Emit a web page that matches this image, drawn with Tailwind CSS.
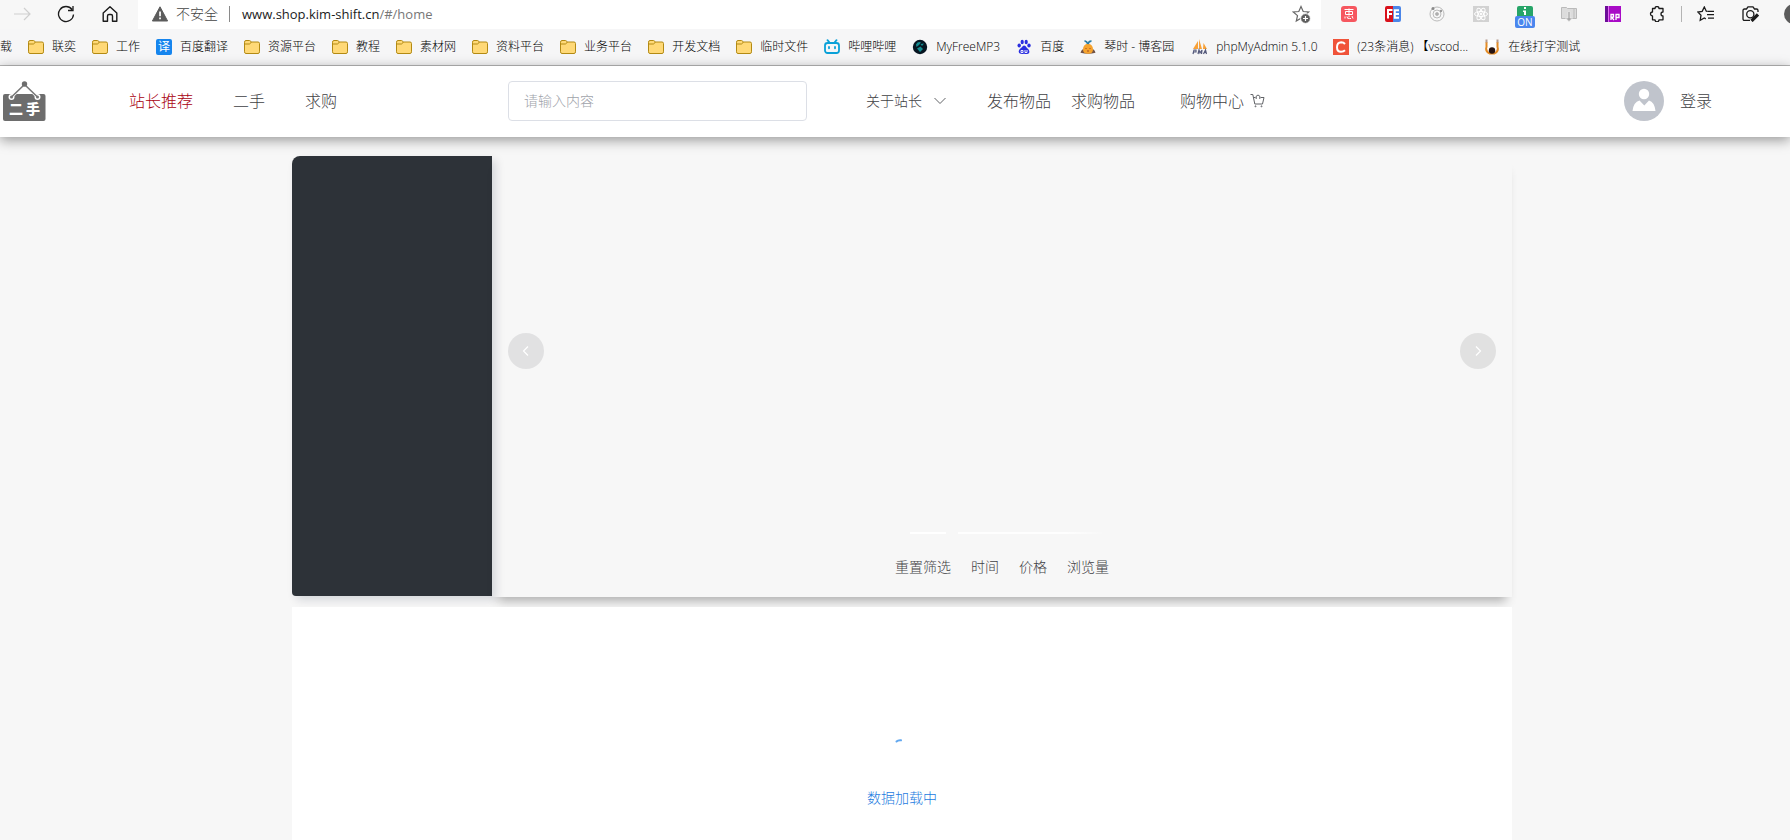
<!DOCTYPE html>
<html lang="zh-CN">
<head>
<meta charset="utf-8">
<title>二手</title>
<script src="https://cdn.jsdelivr.net/npm/@tailwindcss/browser@4"></script>
</head>
<body class="min-h-screen overflow-hidden flex flex-col bg-[#f7f7f7] font-['Open_Sans','Noto_Sans_CJK_SC',sans-serif] font-light text-[#3f4145]">
<svg class="hidden" aria-hidden="true">
  <symbol id="folder" viewBox="0 0 16 16">
    <path d="M.5 3.2Q.5 1.5 2 1.5h3.4q.8 0 1.300.7l.5.8H14q1.500 0 1.500 1.500V12.800q0 1.700-1.500 1.700H2Q.5 14.500.5 12.800Z" fill="#ffd977" stroke="#b38a13"/>
    <path d="M.8 5h4.400q.8 0 1.300-.7L7.300 3" fill="none" stroke="#b38a13"/>
  </symbol>
</svg>

<!-- Browser toolbar -->
<div class="flex h-[29px] shrink-0 bg-[#f7f7f7] text-black">
  <div class="flex w-[138px] shrink-0 items-center pl-[10px] pb-px">
    <button class="w-6 flex justify-center" aria-label="前进"><svg width="18" height="16" viewBox="0 0 18 16" fill="none" stroke="#cfcfcf" stroke-width="1.200"><path d="M1 8h16M11 2l6 6-6 6"/></svg></button>
    <button class="w-6 ml-5 flex justify-center" aria-label="刷新"><svg width="18" height="18" viewBox="0 0 18 18" fill="none" stroke="#1b1b1b" stroke-width="1.300"><path d="M16.500 9.500A7.500 7.500 0 1 1 15 4.500M16 1v4.500h-5"/></svg></button>
    <button class="w-6 ml-5 flex justify-center" aria-label="主页"><svg width="18" height="18" viewBox="0 0 18 18" fill="none" stroke="#1b1b1b" stroke-width="1.400" stroke-linejoin="round"><path d="M2.200 8 9 1.800 15.800 8v8.200h-4.300V11q0-1.500-1.500-1.500H8Q6.500 9.500 6.500 11v5.200H2.200Z"/></svg></button>
  </div>
  <div class="flex flex-1 min-w-0 items-center bg-white pl-[14px] pr-[10px] pb-px text-sm">
    <svg class="shrink-0" width="16" height="16" viewBox="0 0 16 16"><path d="M8 .8 15.600 15H.4Z" fill="#5c5c5c" stroke="#5c5c5c" stroke-linejoin="round"/><path d="M7.200 5.500h1.700v4.800H7.200zM7.200 11.500h1.700v1.700H7.200z" fill="#fff"/></svg>
    <span class="ml-2 text-[#444] whitespace-nowrap">不安全</span>
    <span class="ml-[11px] h-4 w-px bg-[#8a8a8a]"></span>
    <span class="ml-3 text-[13px] font-normal whitespace-nowrap text-[#1b1b1b]">www.shop.kim-shift.cn<span class="text-[#777]">/#/home</span></span>
    <button class="ml-auto" aria-label="收藏此页"><svg width="19" height="19" viewBox="0 0 19 19"><path d="M9 1.500l2.200 5 5.500.5-4.200 3.600L13.700 16 9 13.200 4.300 16l1.200-5.400L1.300 7l5.500-.5Z" fill="none" stroke="#686868" stroke-width="1.200"/><circle cx="13.500" cy="13.500" r="4.900" fill="#5f5f5f" stroke="#fff"/><path d="M13.500 11v5M11 13.500h5" stroke="#fff" stroke-width="1.200"/></svg></button>
  </div>
  <div class="flex shrink-0 w-[469px] overflow-hidden items-center pl-[6px] pb-px">
    <button class="w-11 shrink-0 flex justify-center" aria-label="扩展"><svg width="16" height="16" viewBox="0 0 16 16"><rect width="16" height="16" rx="3" fill="#f6575f"/><path d="M3.500 3.500h9M4.500 5.500h7v3h-7zM8 2.500v7M4 10.500v2M6 10.500q0 2.500 2.500 2h1.500M8 10.200v1M11 10l1 2.500" fill="none" stroke="#fff"/></svg></button>
    <button class="w-11 shrink-0 flex justify-center" aria-label="FeHelper"><svg width="16" height="16" viewBox="0 0 16 16"><path d="M2 0h6v16H2q-2 0-2-2V2q0-2 2-2" fill="#d9111b"/><path d="M8 0h6q2 0 2 2v12q0 2-2 2H8Z" fill="#4b86e8"/><path d="M3 12.500V4h4.500M3 8h4M14 4.200H9.800v7.600H14M9.800 8H14" fill="none" stroke="#fff" stroke-width="2"/></svg></button>
    <button class="w-11 shrink-0 flex justify-center" aria-label="轨道"><svg width="16" height="16" viewBox="0 0 16 16" fill="none" stroke="#bbb"><circle cx="8" cy="8" r="7"/><circle cx="8" cy="8" r="4"/><circle cx="8" cy="8" r="1.500" fill="#aaa"/><circle cx="4" cy="2.500" r="1.500" fill="#888" stroke="none"/><circle cx="12" cy="5" r="1.200" fill="#999" stroke="none"/></svg></button>
    <button class="w-11 shrink-0 flex justify-center" aria-label="React"><svg width="16" height="16" viewBox="0 0 16 16" fill="none" stroke="#fff"><rect width="16" height="16" fill="#d2d2d2" stroke="none"/><ellipse cx="8" cy="8" rx="6.500" ry="2.500"/><ellipse cx="8" cy="8" rx="6.500" ry="2.500" transform="rotate(60 8 8)"/><ellipse cx="8" cy="8" rx="6.500" ry="2.500" transform="rotate(120 8 8)"/><circle cx="8" cy="8" r="1" fill="#fff"/></svg></button>
    <button class="w-11 shrink-0 flex flex-col items-center pt-[6px]" aria-label="扩展已开启"><svg width="16" height="10" viewBox="0 0 16 10"><path d="M2 0h12q2 0 2 2v8H0V2q0-2 2-2" fill="#27a568"/><path d="M7 1h2v2H7zM6 4.500h3V9H7V6H6z" fill="#fff"/></svg><span class="w-5 h-3 bg-[#4a86ee] rounded-[2px] text-white text-[10px] leading-3 font-normal text-center">ON</span></button>
    <button class="w-11 shrink-0 flex justify-center" aria-label="下载文件夹"><svg width="16" height="16" viewBox="0 0 16 16"><path d="M.5 1.500h5l1 1h9v10H.5Z" fill="#dcdcdc" stroke="#bababa"/><path d="M13 2v10" stroke="#bbb"/><path d="M7 5.500h2V12h2.500L8 15.500 4.500 12H7Z" fill="#aaa" stroke="#eee" stroke-width=".6"/></svg></button>
    <button class="w-11 shrink-0 flex justify-center" aria-label="Axure RP"><svg width="16" height="16" viewBox="0 0 16 16"><path d="M0 0h16v16H0z" fill="#a80bc6"/><path d="M0 0h3v16H0z" fill="#6c0d98"/><path d="M3 0h1v16H3z" fill="#e06cf0"/><path d="M6 14V8.500h2.500v2.700H6.500L9 14M11 14V8.500h3v3h-3" fill="none" stroke="#fff" stroke-width="1.300"/></svg></button>
    <button class="w-11 shrink-0 flex justify-center" aria-label="扩展管理"><svg width="16" height="16" viewBox="0 0 16 16" fill="none" stroke="#1b1b1b" stroke-width="1.300" stroke-linejoin="round"><path d="M3.500 2.500H6a2 2 0 0 1 4 0h4V6a2 2 0 1 0 0 4v3.800h-4a2 2 0 0 1-4 0H3.500V10a2 2 0 0 1 0-4Z"/></svg></button>
    <span class="h-4 w-px shrink-0 ml-[2px] mr-[2px] bg-[#b4b4b4]"></span>
    <button class="w-11 shrink-0 flex justify-center" aria-label="收藏夹"><svg width="18" height="16" viewBox="0 0 18 16" fill="none" stroke="#1b1b1b" stroke-width="1.300"><path d="M10.300 5.400 9.300 5.200 7.300 1 5.200 5.300.8 6 4 9.300 3.200 14.200 7.300 12l1.500.9M10.500 5.300H17M10 8.700h7M11 12.100h6"/></svg></button>
    <button class="w-11 shrink-0 flex justify-center" aria-label="网页捕获"><svg width="17" height="16" viewBox="0 0 17 16" fill="none" stroke="#1b1b1b" stroke-width="1.300"><path d="M8 14.300H2.500Q1 14.300 1 12.800V4.500Q1 3 2.500 3h2L6 .9h5L12.500 3h2Q16 3 16 4.500V6"/><circle cx="8.300" cy="8.300" r="3.600"/><path d="M16 8.500 9.500 15" stroke-width="3.200"/></svg></button>
    <button class="w-11 shrink-0 flex justify-center" aria-label="个人资料"><span class="size-5 rounded-full bg-[#5c5c5c]"></span></button>
  </div>
</div>

<!-- Bookmarks bar -->
<nav class="flex h-[37px] shrink-0 items-center gap-4 border-b border-[#b8b8b8] bg-[#f6f6f7] overflow-hidden whitespace-nowrap text-xs text-black" aria-label="书签">
  <a href="#" class="w-3 shrink-0">载</a>
  <a href="#" class="flex shrink-0 items-center gap-2"><svg width="16" height="16"><use href="#folder"/></svg>联奕</a>
  <a href="#" class="flex shrink-0 items-center gap-2"><svg width="16" height="16"><use href="#folder"/></svg>工作</a>
  <a href="#" class="flex shrink-0 items-center gap-2"><span class="size-4 rounded-[2px] bg-[#1685ee] text-white text-xs leading-4 font-normal text-center">译</span>百度翻译</a>
  <a href="#" class="flex shrink-0 items-center gap-2"><svg width="16" height="16"><use href="#folder"/></svg>资源平台</a>
  <a href="#" class="flex shrink-0 items-center gap-2"><svg width="16" height="16"><use href="#folder"/></svg>教程</a>
  <a href="#" class="flex shrink-0 items-center gap-2"><svg width="16" height="16"><use href="#folder"/></svg>素材网</a>
  <a href="#" class="flex shrink-0 items-center gap-2"><svg width="16" height="16"><use href="#folder"/></svg>资料平台</a>
  <a href="#" class="flex shrink-0 items-center gap-2"><svg width="16" height="16"><use href="#folder"/></svg>业务平台</a>
  <a href="#" class="flex shrink-0 items-center gap-2"><svg width="16" height="16"><use href="#folder"/></svg>开发文档</a>
  <a href="#" class="flex shrink-0 items-center gap-2"><svg width="16" height="16"><use href="#folder"/></svg>临时文件</a>
  <a href="#" class="flex shrink-0 items-center gap-2"><svg width="16" height="16" viewBox="0 0 16 16" fill="none" stroke="#0aa1d8" stroke-width="1.800" stroke-linecap="round"><rect x="1" y="4" width="14" height="10" rx="2.500"/><path d="M3.500 1.200 5.500 3.500M12.500 1.200 10.500 3.500M5 8v1.300M11 8v1.300"/></svg>哔哩哔哩</a>
  <a href="#" class="flex shrink-0 items-center gap-2"><svg width="16" height="16" viewBox="0 0 16 16"><circle cx="8" cy="8" r="7.200" fill="#071622"/><path d="M4 5.500Q6 2 9 3.500L7 6 4.500 8ZM8.500 5 12 4.500 10 7ZM5 9.500 8.500 7.500 11 10 8 13Z" fill="#148c91"/></svg><span class="w-16">MyFreeMP3</span></a>
  <a href="#" class="flex shrink-0 items-center gap-2"><svg width="16" height="16" viewBox="0 0 16 16" fill="#2b2fe0"><ellipse cx="3.200" cy="6.500" rx="1.700" ry="2.100"/><ellipse cx="6.200" cy="3" rx="1.600" ry="2.200"/><ellipse cx="10.200" cy="3" rx="1.600" ry="2.200"/><ellipse cx="13" cy="6.500" rx="1.700" ry="2.100"/><path d="M8 6.500q1.500 0 2.800 2.200l2 2q1.500 3-.8 4-1.500.5-4 .1-2.500.5-4.200-.2-2-1.500-.4-4L5.800 8.200Q7 6.500 8 6.500"/><path d="M5 11.500h2v2H5zM9 11v2.500h2V11" fill="none" stroke="#fff" stroke-width=".9"/></svg>百度</a>
  <a href="#" class="flex shrink-0 items-center gap-2"><svg width="16" height="16" viewBox="0 0 16 16"><path d="M.5 13.800Q1.500 10 5 9.500h6q3.500.5 4.500 4.300-7 1.800-15 0" fill="#725347"/><path d="M8 4.500q5 1 5 6 0 4.200-5 4.200t-5-4.200Q3 5.500 8 4.500" fill="#f5a32e"/><path d="M7.800 5Q7 2.500 4.500 1.800M8 5Q9 2 11.500 2.200" stroke="#287da8" stroke-width="1.700" fill="none"/><path d="M6 9v1M10 9v1M7 11.800q1 .8 2 0" stroke="#a34b20" fill="none"/></svg><span class="w-18">琴时 - 博客园</span></a>
  <a href="#" class="flex shrink-0 items-center gap-2"><svg width="16" height="16" viewBox="0 0 16 16"><path d="M1 10 6 2v8ZM7 10V0l3 10ZM11 10l.5-6L15 10Z" fill="#f8a137"/><path d="M1 15l1-4h2v2H2M6 15l1-4 1 3 2-3-.5 4M11.500 15l2-4 1 4M12.500 13.500h2" fill="none" stroke="#555a7c" stroke-width="1.200"/></svg><span class="w-[101px]">phpMyAdmin 5.1.0</span></a>
  <a href="#" class="flex shrink-0 items-center gap-2"><svg width="16" height="16" viewBox="0 0 16 16"><path d="M0 0h16v16H0z" fill="#f0533a"/><path d="M12 5Q10.500 3.300 8.300 3.300 4 3.500 4 8.200q0 4.500 4 4.500 2.500 0 4-1.500" fill="none" stroke="#fff" stroke-width="2"/></svg><span class="w-[111px]">(23条消息) 【vscod...</span></a>
  <a href="#" class="flex shrink-0 items-center gap-2"><svg width="16" height="16" viewBox="0 0 16 16"><path d="M2 1h12v11H2z" fill="#fff"/><path d="M2.500 3v5q-1.500 4 3 6.500h5q4.500-2.500 3-6.500V3" fill="none" stroke="#e48b25" stroke-width="2"/><path d="M1.500.5h2v3h-2zM12.500.5h2v3h-2z" fill="#b59b8f"/><circle cx="8" cy="11.500" r="3.200" fill="#271411"/></svg>在线打字测试</a>
</nav>

<!-- Site header -->
<header class="relative z-10 flex h-[71px] shrink-0 items-center bg-white pb-0.5 text-base whitespace-nowrap shadow-[0_3px_12px_rgba(0,0,0,0.4)]">
  <a href="#" class="ml-[3px] w-[43px] shrink-0" aria-label="二手">
    <svg width="43" height="40" viewBox="0 0 43 40"><rect x="0" y="13" width="42.500" height="27" rx="2" fill="#6d6d6d"/><circle cx="8.500" cy="16" r="3" fill="#fff"/><circle cx="34.500" cy="16" r="3" fill="#fff"/><path d="M8.500 16 21.500 3.500 34.500 16" fill="none" stroke="#fff" stroke-width="3"/><path d="M8.500 16 21.500 3.500 34.500 16" fill="none" stroke="#777" stroke-width="1.600"/><circle cx="8.500" cy="16" r="1.500" fill="#777"/><circle cx="34.500" cy="16" r="1.500" fill="#777"/><circle cx="21.500" cy="3" r="2.700" fill="#6d6d6d"/><text x="6" y="33" font-size="14" font-weight="900" fill="#fff" font-family="Noto Sans CJK SC, sans-serif">二</text><text x="23" y="33" font-size="14" font-weight="900" fill="#fff" font-family="Noto Sans CJK SC, sans-serif">手</text></svg>
  </a>
  <nav class="ml-[83px] flex shrink-0 gap-10">
    <a href="#" class="text-[#a8000f]">站长推荐</a>
    <a href="#">二手</a>
    <a href="#">求购</a>
  </nav>
  <input type="text" aria-label="搜索" placeholder="请输入内容" class="ml-[171px] h-10 w-[299px] rounded border border-[#dcdfe6] bg-white px-[15px] text-sm placeholder:text-[#a0a3aa] outline-none">
  <button class="ml-[59px] flex items-center gap-3 text-sm">关于站长<svg width="12" height="8" viewBox="0 0 12 8" fill="none" stroke="#606266"><path d="M.5 1 6 6.500 11.500 1"/></svg></button>
  <nav class="ml-[41px] flex shrink-0">
    <a href="#">发布物品</a>
    <a href="#" class="ml-5">求购物品</a>
    <a href="#" class="ml-[45px] flex items-center gap-[6px]">购物中心<svg width="15" height="15" viewBox="0 0 15 15" fill="none" stroke="#606266"><path d="M.5 1.500h2.300L4.800 11h7.700L14 4.500H10.500M3.500 4.500h2M6.200 6V3.200Q8 .8 9.800 3.200V6"/><circle cx="5.500" cy="13.300" r=".5"/><circle cx="11.500" cy="13.300" r=".5"/></svg></a>
  </nav>
  <a href="#" class="ml-auto mr-[78px] flex items-center gap-4">
    <svg width="40" height="40" viewBox="0 0 40 40"><circle cx="20" cy="20" r="20" fill="#c0c4cc"/><circle cx="20" cy="13" r="5.200" fill="#fff"/><path d="M8.500 30Q9.500 21 15.500 19.500L20.300 24.500 25 19.500Q30.500 21 31.500 30Z" fill="#fff"/></svg>
    登录
  </a>
</header>

<!-- Page content -->
<main class="flex flex-1 justify-center pl-[14px] pt-[19px]">
  <div class="flex w-full max-w-[1220px] flex-col">
    <div class="flex">
      <aside class="mb-px w-[200px] shrink-0 rounded-l-lg rounded-bl bg-[#2d3238] shadow-[4px_4px_10px_rgba(0,20,50,0.14)]" aria-label="分类"></aside>
      <section class="flex flex-1 flex-col shadow-[0_10px_10px_-6px_rgba(0,0,0,0.3)]">
        <div class="relative flex h-[390px] items-center justify-between px-4">
          <button class="flex size-9 items-center justify-center rounded-full bg-[#e1e1e2]" aria-label="上一张"><svg width="12" height="12" viewBox="0 0 12 12" fill="none" stroke="#fff" stroke-width="1.200"><path d="M8 1.500 3.500 6 8 10.500"/></svg></button>
          <button class="flex size-9 items-center justify-center rounded-full bg-[#e1e1e1]" aria-label="下一张"><svg width="12" height="12" viewBox="0 0 12 12" fill="none" stroke="#fff" stroke-width="1.200"><path d="M4 1.500 8.500 6 4 10.500"/></svg></button>
          <div class="absolute bottom-3 left-1/2 flex -translate-x-1/2 pl-2">
            <button class="mr-3 h-[2px] w-9 bg-white" aria-label="第1张"></button>
            <button class="h-[2px] w-9 bg-white/90" aria-label="第2张"></button>
            <button class="h-[2px] w-9 bg-white/90" aria-label="第3张"></button>
            <button class="h-[2px] w-9 bg-white/90" aria-label="第4张"></button>
            <button class="h-[2px] w-9 bg-linear-to-r from-white/90 to-white/10" aria-label="第5张"></button>
          </div>
        </div>
        <div class="flex h-[51px] items-start justify-center gap-5 pt-[11px] text-sm">
          <button>重置筛选</button>
          <button>时间</button>
          <button>价格</button>
          <button>浏览量</button>
        </div>
      </section>
    </div>
    <section class="relative mt-[10px] flex flex-1 flex-col items-center bg-white pt-[131px] text-sm text-[#1c7be0]" role="status">
      <svg class="h-[42px] w-[42px]" viewBox="0 0 42 42" fill="none"><path d="M15.500 3.500Q17 2 20 2.300" stroke="#62a8f0" stroke-width="2" stroke-linecap="round"/></svg>
      <p class="mt-2">数据加载中</p>
    </section>
  </div>
</main>
</body>
</html>
